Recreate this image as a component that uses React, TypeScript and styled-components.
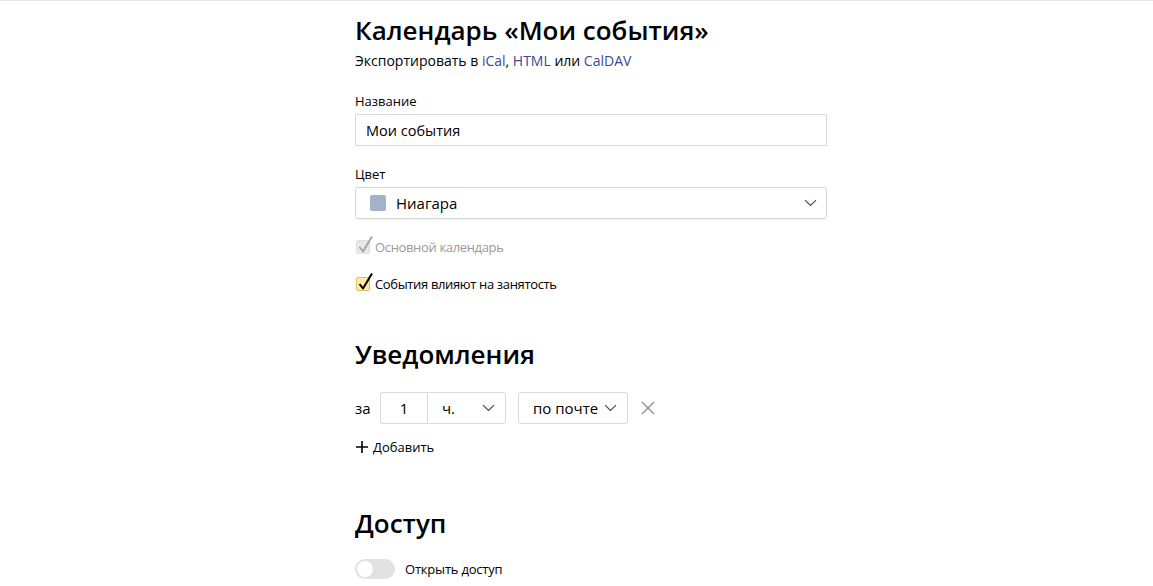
import React from "react";
import styled, { createGlobalStyle } from "styled-components";

const GlobalStyle = createGlobalStyle`
  html, body {
    margin: 0;
    padding: 0;
    background: #fff;
  }
  body {
    font-family: "Open Sans", "Liberation Sans", Arial, sans-serif;
    color: #000;
    -webkit-font-smoothing: antialiased;
  }
`;

const Page = styled.div`
  border-top: 1px solid #e6e6e6;
  min-height: 585px;
`;

const Main = styled.main`
  margin-left: 355px;
  width: 472px;
  display: flex;
  flex-direction: column;
`;

const Title = styled.h1<{ $top: number }>`
  margin: ${(p) => p.$top}px 0 0;
  font-size: 26px;
  line-height: 32px;
  font-weight: 600;
  color: #000;
`;

const Small = styled.div<{ $top: number; $size?: number }>`
  margin-top: ${(p) => p.$top}px;
  font-size: ${(p) => p.$size ?? 13}px;
  line-height: 18px;
  color: #000;
`;

const Link = styled.a`
  color: #3b4a94;
  text-decoration: none;
`;

const Field = styled.div`
  margin-top: 4px;
  height: 32px;
  box-sizing: border-box;
  border: 1px solid #d9d9d9;
  display: flex;
  align-items: center;
  padding: 0 10px;
  font-size: 14.5px;
  color: #000;
`;

const SelectField = styled(Field)`
  border-radius: 3px;
  border-color: #d6d6d6;
  box-shadow: 0 1px 1px rgba(0, 0, 0, 0.05);
  padding: 0 9px 0 14px;
  gap: 10px;
  font-size: 15px;
`;

const Swatch = styled.span<{ $color: string }>`
  width: 16px;
  height: 16px;
  border-radius: 2px;
  background: ${(p) => p.$color};
`;

const Grow = styled.span`
  flex: 1;
`;

const CheckRow = styled.label<{ $top: number; $disabled?: boolean }>`
  margin-top: ${(p) => p.$top}px;
  display: flex;
  align-items: center;
  height: 18px;
  font-size: 13px;
  letter-spacing: -0.35px;
  color: ${(p) => (p.$disabled ? "#9a9a9a" : "#000")};
`;

const Box = styled.span<{ $disabled?: boolean }>`
  position: relative;
  width: 14px;
  height: 14px;
  margin: 0 5px 0 1px;
  box-sizing: border-box;
  border-radius: 2px;
  background: ${(p) => (p.$disabled ? "#e8e8e8" : "#ffeba0")};
  border: 1px solid ${(p) => (p.$disabled ? "#e0e0e0" : "#d8c26a")};
  svg {
    position: absolute;
    left: 0px;
    top: -6px;
  }
`;

const Row = styled.div<{ $top: number }>`
  margin-top: ${(p) => p.$top}px;
  display: flex;
  align-items: center;
  height: 32px;
  font-size: 15px;
`;

const Za = styled.span`
  width: 25px;
`;

const Group = styled.div`
  display: flex;
  height: 32px;
`;

const NumBox = styled.div`
  width: 47px;
  box-sizing: border-box;
  border: 1px solid #d9d9d9;
  border-right: none;
  border-radius: 3px 0 0 3px;
  display: flex;
  align-items: center;
  justify-content: center;
`;

const Drop = styled.div<{ $w: number; $joined?: boolean }>`
  width: ${(p) => p.$w}px;
  height: 32px;
  box-sizing: border-box;
  border: 1px solid #d9d9d9;
  border-radius: ${(p) => (p.$joined ? "0 3px 3px 0" : "3px")};
  display: flex;
  align-items: center;
  justify-content: space-between;
  padding: 0 10px 0 14px;
`;

const Gap = styled.span<{ $w: number }>`
  width: ${(p) => p.$w}px;
`;

const Close = styled.span`
  margin-left: 13px;
  display: flex;
`;

const Add = styled.div`
  margin-top: 14px;
  height: 18px;
  display: flex;
  align-items: center;
  gap: 4px;
  font-size: 13px;
  color: #000;
`;

const ToggleRow = styled.div`
  margin-top: 20px;
  height: 20px;
  display: flex;
  align-items: center;
  gap: 10px;
  font-size: 13px;
  letter-spacing: -0.2px;
`;

const Toggle = styled.span`
  position: relative;
  width: 40px;
  height: 20px;
  border-radius: 10px;
  background: #e2e2e2;
  &::after {
    content: "";
    position: absolute;
    left: 2px;
    top: 2px;
    width: 16px;
    height: 16px;
    border-radius: 50%;
    background: #fff;
  }
`;

const Chevron = () => (
  <svg width="13" height="8" viewBox="0 0 13 8">
    <path d="M1 1.2 L6.5 6.5 L12 1.2" fill="none" stroke="#444" strokeWidth="1.1" />
  </svg>
);

const Tick = ({ color }: { color: string }) => (
  <svg width="17" height="19" viewBox="0 0 17 19">
    <path d="M2.5 12 L6 16.5 L15 1.5" fill="none" stroke={color} strokeWidth="2" strokeLinejoin="round" />
  </svg>
);

export default function App() {
  return (
    <Page>
      <GlobalStyle />
      <Main>
        <Title $top={13}>Календарь «Мои события»</Title>
        <Small $top={6} $size={14}>
          Экспортировать в <Link href="#">iCal</Link>, <Link href="#">HTML</Link> или{" "}
          <Link href="#">CalDAV</Link>
        </Small>

        <Small $top={22}>Название</Small>
        <Field>Мои события</Field>

        <Small $top={19}>Цвет</Small>
        <SelectField>
          <Swatch $color="#a3b2c4" />
          <Grow>Ниагара</Grow>
          <Chevron />
        </SelectField>

        <CheckRow $top={19} $disabled>
          <Box $disabled>
            <Tick color="#a8a8a8" />
          </Box>
          Основной календарь
        </CheckRow>
        <CheckRow $top={19}>
          <Box>
            <Tick color="#000" />
          </Box>
          События влияют на занятость
        </CheckRow>

        <Title $top={45}>Уведомления</Title>
        <Row $top={22}>
          <Za>за</Za>
          <Group>
            <NumBox>1</NumBox>
            <Drop $w={79} $joined>
              ч.
              <Chevron />
            </Drop>
          </Group>
          <Gap $w={12} />
          <Drop $w={110}>
            по почте
            <Chevron />
          </Drop>
          <Close>
            <svg width="14" height="14" viewBox="0 0 14 14">
              <path d="M1 1 L13 13 M13 1 L1 13" stroke="#9a9a9a" strokeWidth="1.6" />
            </svg>
          </Close>
        </Row>
        <Add>
          <svg width="14" height="14" viewBox="0 0 14 14">
            <path d="M7 1 V13 M1 7 H13" stroke="#000" strokeWidth="1.6" />
          </svg>
          Добавить
        </Add>

        <Title $top={51}>Доступ</Title>
        <ToggleRow>
          <Toggle />
          Открыть доступ
        </ToggleRow>
      </Main>
    </Page>
  );
}
